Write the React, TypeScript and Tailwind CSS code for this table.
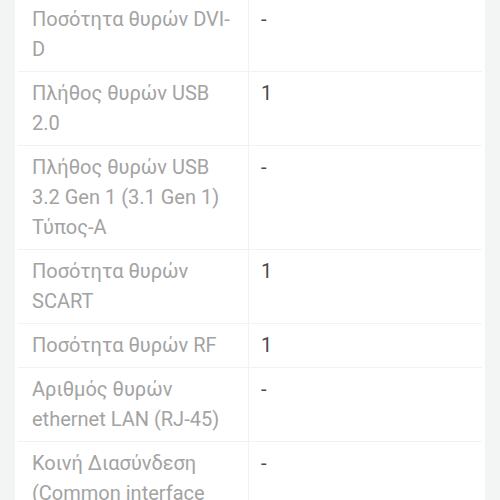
import React from "react";

const rows: { label: string; value: string }[] = [
  { label: "Ποσότητα θυρών DVI-D", value: "-" },
  { label: "Πλήθος θυρών USB 2.0", value: "1" },
  { label: "Πλήθος θυρών USB 3.2 Gen 1 (3.1 Gen 1) Τύπος-A", value: "-" },
  { label: "Ποσότητα θυρών SCART", value: "1" },
  { label: "Ποσότητα θυρών RF", value: "1" },
  { label: "Αριθμός θυρών ethernet LAN (RJ-45)", value: "-" },
  { label: "Κοινή Διασύνδεση (Common interface (CI))", value: "-" },
];

export default function App() {
  return (
    <div
      className="w-[500px] h-[500px] overflow-hidden bg-[#f3f5f4]"
      style={{ fontFamily: "Roboto, 'Noto Sans', sans-serif" }}
    >
      <div className="ml-[15px] w-[470px] bg-white -mt-[2px]">
        {rows.map((r, i) => (
          <div key={i} className="flex border-b border-[#f1f2f1] mx-[3px]">
            <div className="w-[231px] shrink-0 border-r border-[#f1f2f1] pl-[14px] pr-[8px] pt-[6px] pb-[7px] text-[20px] leading-[30px] text-[#a3a3a3]">
              {r.label}
            </div>
            <div className="flex-1 pl-[12px] pt-[6px] pb-[7px] text-[20px] leading-[30px] text-[#4a4a4a]">
              {r.value}
            </div>
          </div>
        ))}
      </div>
    </div>
  );
}
